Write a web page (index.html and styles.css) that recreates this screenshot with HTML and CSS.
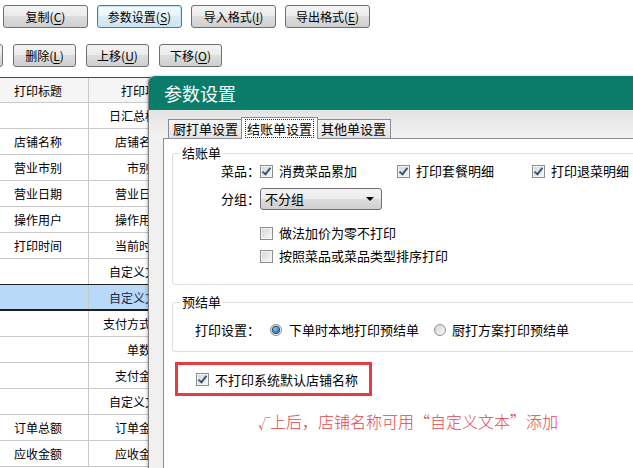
FILE: index.html
```html
<!DOCTYPE html>
<html lang="zh-CN">
<head>
    <meta charset="UTF-8">
    <title>参数设置</title>
    <link rel="stylesheet" href="styles.css">
</head>
<body>
    <div class="toolbar toolbar-top">
        <button class="btn btn-wide">复制(<u>C</u>)</button>
        <button class="btn btn-wide btn-focus">参数设置(<u>S</u>)</button>
        <button class="btn btn-wide">导入格式(<u>I</u>)</button>
        <button class="btn btn-wide">导出格式(<u>E</u>)</button>
    </div>
    <div class="toolbar toolbar-bottom">
        <button class="btn btn-narrow btn-clipped" aria-label="新增"></button>
        <button class="btn btn-narrow">删除(<u>L</u>)</button>
        <button class="btn btn-narrow">上移(<u>U</u>)</button>
        <button class="btn btn-narrow">下移(<u>O</u>)</button>
    </div>

    <div class="grid">
        <div class="grid-row grid-head"><div class="cell cell-title">打印标题</div><div class="cell cell-item">打印项</div><div class="cell"></div></div>
        <div class="grid-row"><div class="cell cell-title"></div><div class="cell cell-item">日汇总标题</div><div class="cell"></div></div>
        <div class="grid-row"><div class="cell cell-title">店铺名称</div><div class="cell cell-item">店铺名称</div><div class="cell"></div></div>
        <div class="grid-row"><div class="cell cell-title">营业市别</div><div class="cell cell-item">市别</div><div class="cell"></div></div>
        <div class="grid-row"><div class="cell cell-title">营业日期</div><div class="cell cell-item">营业日期</div><div class="cell"></div></div>
        <div class="grid-row"><div class="cell cell-title">操作用户</div><div class="cell cell-item">操作用户</div><div class="cell"></div></div>
        <div class="grid-row"><div class="cell cell-title">打印时间</div><div class="cell cell-item">当前时间</div><div class="cell"></div></div>
        <div class="grid-row before-selected"><div class="cell cell-title"></div><div class="cell cell-item">自定义文本</div><div class="cell"></div></div>
        <div class="grid-row selected"><div class="cell cell-title"></div><div class="cell cell-item">自定义文本</div><div class="cell"></div></div>
        <div class="grid-row"><div class="cell cell-title"></div><div class="cell cell-item">支付方式明细</div><div class="cell"></div></div>
        <div class="grid-row"><div class="cell cell-title"></div><div class="cell cell-item">单数</div><div class="cell"></div></div>
        <div class="grid-row"><div class="cell cell-title"></div><div class="cell cell-item">支付金额</div><div class="cell"></div></div>
        <div class="grid-row"><div class="cell cell-title"></div><div class="cell cell-item">自定义文本</div><div class="cell"></div></div>
        <div class="grid-row"><div class="cell cell-title">订单总额</div><div class="cell cell-item">订单金额</div><div class="cell"></div></div>
        <div class="grid-row"><div class="cell cell-title">应收金额</div><div class="cell cell-item">应收金额</div><div class="cell"></div></div>
    </div>

    <div class="dialog">
        <div class="dialog-title">参数设置</div>
        <div class="tabstrip">
            <span class="tab">厨打单设置</span>
            <span class="tab tab-active"><span class="tab-focus">结账单设置</span></span>
            <span class="tab">其他单设置</span>
        </div>
        <div class="panel">
            <fieldset class="group">
                <legend>结账单</legend>
                <div class="group-body group-bill">
                    <div class="row">
                        <span class="row-label">菜品：</span>
                        <span class="check check-first"><i class="cb on"></i>消费菜品累加</span>
                        <span class="check check-second"><i class="cb on"></i>打印套餐明细</span>
                        <span class="check"><i class="cb on"></i>打印退菜明细</span>
                    </div>
                    <div class="row row-select">
                        <span class="row-label">分组：</span>
                        <span class="select">不分组<i class="select-arrow"></i></span>
                    </div>
                    <div class="row row-indent row-gap">
                        <span class="check"><i class="cb"></i>做法加价为零不打印</span>
                    </div>
                    <div class="row row-indent row-tight">
                        <span class="check"><i class="cb"></i>按照菜品或菜品类型排序打印</span>
                    </div>
                </div>
            </fieldset>
            <fieldset class="group group-pre">
                <legend>预结单</legend>
                <div class="group-body group-prebill">
                    <div class="row">
                        <span class="row-label-wide">打印设置：</span>
                        <span class="check check-radio"><i class="rd on"></i>下单时本地打印预结单</span>
                        <span class="check"><i class="rd"></i>厨打方案打印预结单</span>
                    </div>
                </div>
            </fieldset>
            <div class="highlight">
                <span class="check"><i class="cb on"></i>不打印系统默认店铺名称</span>
            </div>
            <p class="note"><span class="tick">√</span>上后，店铺名称可用“自定义文本”添加</p>
        </div>
    </div>
</body>
</html>
```

FILE: styles.css
```css
html, body {
    margin: 0;
    height: 100%;
    overflow: hidden;
}
body {
    position: relative;
    background-color: #fff;
    color: #000;
    font-family: "Noto Sans CJK SC", "Liberation Sans", sans-serif;
    font-size: 12px;
}

/* toolbars */
.toolbar {
    display: flex;
    gap: 9px;
}
.toolbar-top {
    padding: 5px 0 0 3px;
}
.toolbar-bottom {
    margin-top: 16px;
    gap: 10px;
}
.btn {
    box-sizing: border-box;
    height: 23px;
    padding: 0;
    border: 1px solid #707070;
    border-radius: 3px;
    background: linear-gradient(#f3f3f3 0%, #ebebeb 49%, #dddddd 50%, #cfcfcf 100%);
    font: inherit;
    line-height: 20px;
    color: #000;
    text-align: center;
}
.btn u {
    text-underline-offset: 2px;
}
.btn-wide {
    width: 85px;
}
.btn-narrow {
    width: 63px;
}
.btn-clipped {
    margin-left: -60px;
}
.btn-focus {
    border-color: #3c7fb1;
    background: linear-gradient(#f4fafd 0%, #e9f4fb 49%, #dcecf6 50%, #cfe3f0 100%);
    box-shadow: inset 0 0 0 1px #c4e5f6;
}

/* table */
.grid {
    margin-top: 10px;
    width: 260px;
}
.grid-row {
    display: flex;
    box-sizing: border-box;
    height: 26px;
    border-bottom: 1px solid #c9c9c9;
}
.grid-head {
    border-top: 1px solid #4a4a4a;
    background-color: #f5f5f5;
}
.before-selected {
    border-bottom-color: #1e1e1e;
}
.selected {
    border-bottom: 2px solid #1e1e1e;
    background-color: #b9d9f8;
    color: #1c2a44;
}
.cell {
    flex: 1;
    line-height: 25px;
    text-align: center;
    white-space: nowrap;
    overflow: hidden;
}
.cell-title {
    flex: 0 0 auto;
    box-sizing: border-box;
    width: 89px;
    padding-right: 12px;
    border-right: 1px solid #c9c9c9;
}
.cell-item {
    flex: 0 0 auto;
    box-sizing: border-box;
    width: 101px;
    border-right: 1px solid #c9c9c9;
}

/* dialog */
.dialog {
    position: absolute;
    left: 148px;
    top: 76px;
    width: 520px;
    height: 420px;
    background-color: #f0f0f0;
    border-left: 1px solid #808080;
    border-radius: 6px 6px 0 0;
    box-shadow: -1px 0 3px rgba(0, 0, 0, 0.25);
    font-size: 13px;
}
.dialog-title {
    height: 34px;
    padding-left: 15px;
    border-radius: 6px 6px 0 0;
    background-color: #0b7b6a;
    color: #fff;
    font-size: 18px;
    line-height: 34px;
}
.tabstrip {
    display: flex;
    align-items: flex-end;
    height: 28px;
    padding-left: 19px;
    background: linear-gradient(#e3e3e3, #f3f3f3);
}
.tab {
    box-sizing: border-box;
    height: 19px;
    padding: 0 4px;
    border: 1px solid #898c95;
    border-bottom: none;
    background: linear-gradient(#f6f6f6, #e2e2e2);
    line-height: 18px;
    margin-right: -1px;
}
.tab-active {
    position: relative;
    z-index: 1;
    height: 22px;
    margin: 0 -2px -1px -1px;
    padding: 1px 3px 0;
    background: #fff;
}
.tab-focus {
    display: inline-block;
    padding: 0 1px;
    border: 1px dotted #333;
    line-height: 17px;
}
.panel {
    box-sizing: border-box;
    height: 400px;
    margin-left: 14px;
    padding: 6px 0 0 8px;
    border: 1px solid #898c95;
    border-right: none;
    background-color: #fff;
}

/* group boxes */
.group {
    width: 520px;
    margin: 0;
    padding: 0;
    border: 1px solid #d5dfe5;
    border-radius: 3px;
}
.group legend {
    margin-left: 7px;
    padding: 0 2px;
    line-height: 16px;
}
.group-pre {
    margin-top: 9px;
}
.group-bill {
    padding: 0 0 18px 48px;
}
.group-prebill {
    padding: 10px 0 11px 22px;
}
.row {
    display: flex;
    align-items: center;
    height: 20px;
    line-height: 20px;
}
.row-select {
    height: 22px;
    margin-top: 7px;
}
.row-gap {
    margin-top: 13px;
}
.row-tight {
    margin-top: 3px;
}
.row-indent {
    padding-left: 39px;
}
.row-label {
    width: 39px;
}
.row-label-wide {
    width: 75px;
}
.check {
    display: inline-flex;
    align-items: center;
    gap: 6px;
    white-space: nowrap;
}
.check-first {
    width: 137px;
}
.check-second {
    width: 135px;
}
.check-radio {
    width: 164px;
    gap: 7px;
}

/* checkbox and radio marks */
.cb {
    position: relative;
    box-sizing: border-box;
    width: 13px;
    height: 13px;
    border: 1px solid #8e8f8f;
    background: linear-gradient(135deg, #d6d6d6, #f8f8f8);
    box-shadow: inset 0 0 0 1px #f4f4f4;
}
.cb.on::after {
    content: "";
    position: absolute;
    left: 3px;
    top: 0;
    width: 3px;
    height: 7px;
    border: solid #41557a;
    border-width: 0 2px 2px 0;
    transform: rotate(38deg);
}
.rd {
    position: relative;
    box-sizing: border-box;
    width: 12px;
    height: 12px;
    border: 1px solid #8e8f8f;
    border-radius: 50%;
    background: linear-gradient(135deg, #d4d4d4, #fafafa);
}
.rd.on::after {
    content: "";
    position: absolute;
    left: 2px;
    top: 2px;
    width: 6px;
    height: 6px;
    border-radius: 50%;
    background: radial-gradient(circle at 40% 35%, #7fd0f5, #1e6ea6 70%);
    box-shadow: 0 0 0 1px #27476b;
}

/* select */
.select {
    display: flex;
    align-items: center;
    justify-content: space-between;
    box-sizing: border-box;
    width: 122px;
    height: 22px;
    padding: 0 7px 0 4px;
    border: 1px solid #707070;
    border-radius: 3px;
    background: linear-gradient(#f3f3f3 0%, #ebebeb 49%, #dddddd 50%, #cfcfcf 100%);
}
.select-arrow {
    width: 0;
    height: 0;
    border-left: 4px solid transparent;
    border-right: 4px solid transparent;
    border-top: 4px solid #000;
}

/* highlighted option */
.highlight {
    display: flex;
    align-items: center;
    box-sizing: border-box;
    width: 197px;
    height: 34px;
    margin: 10px 0 0 3px;
    padding-left: 18px;
    border: 3px solid #e43c40;
}
.note {
    margin: 15px 0 0 86px;
    color: #e34449;
    font-size: 16px;
    line-height: 20px;
    font-weight: 300;
}
.note .tick {
    font-size: 13px;
    letter-spacing: -1px;
}
```
